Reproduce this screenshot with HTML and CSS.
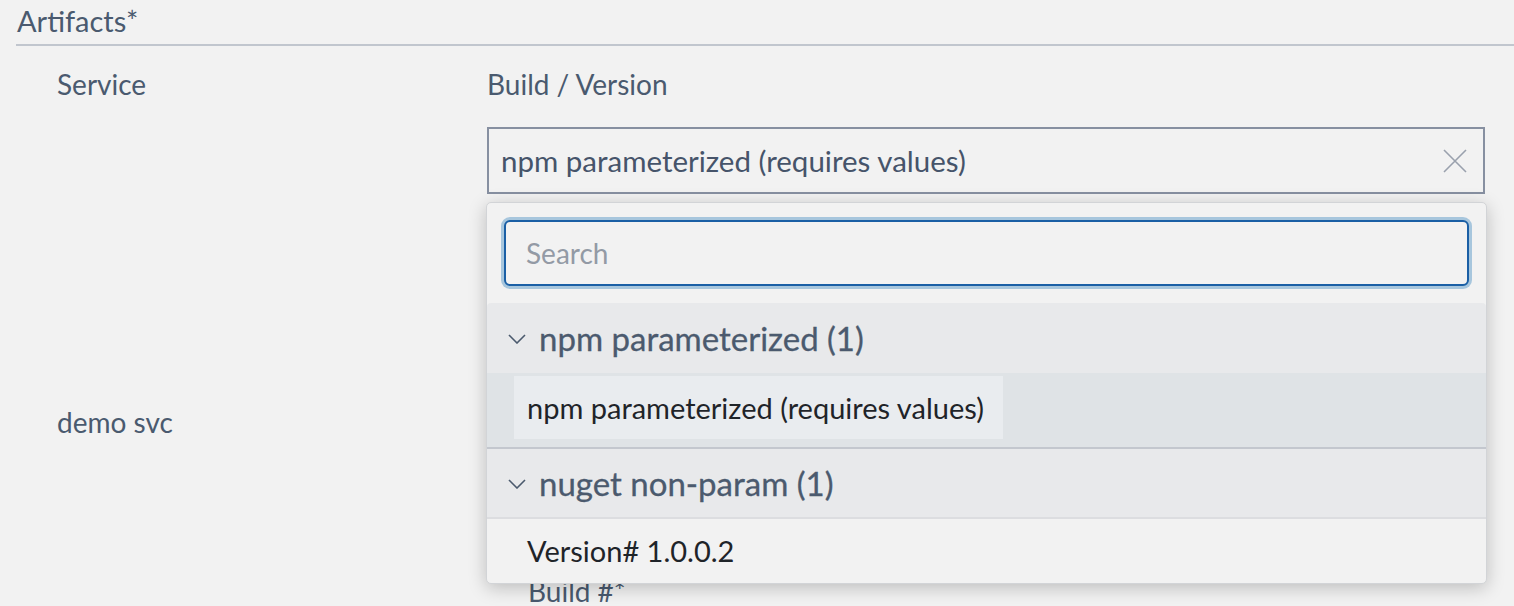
FILE: index.html
```html
<!DOCTYPE html>
<html lang="en">
<head>
    <meta charset="UTF-8">
    <meta name="viewport" content="width=device-width, initial-scale=1.0">
    <title>Artifacts</title>
    <link rel="stylesheet" href="styles.css">
</head>
<body>
    <div class="section">
        <div class="section-title">Artifacts*</div>

        <div class="artifact-table">
            <div class="col-label">Service</div>
            <div class="col-label">Build / Version</div>

            <div class="cell-service"></div>
            <div class="cell-version">
                <div class="select-box">
                    <span class="select-value">npm parameterized (requires values)</span>
                    <svg class="clear-icon" width="24" height="24" viewBox="0 0 24 24">
                        <path d="M1 1 L23 23 M23 1 L1 23" stroke="#9aa1ad" stroke-width="1.6" fill="none"/>
                    </svg>
                </div>

                <div class="dropdown">
                    <div class="search-wrap">
                        <input type="text" class="search-input" placeholder="Search">
                    </div>

                    <div class="group-header first">
                        <svg class="chevron" width="18" height="10" viewBox="0 0 18 10">
                            <path d="M1 1 L9 9 L17 1" stroke="#4b5a6e" stroke-width="1.6" fill="none"/>
                        </svg>
                        npm parameterized (1)
                    </div>
                    <div class="group-items active">
                        <div class="option focused">npm parameterized (requires values)</div>
                    </div>

                    <div class="group-header second">
                        <svg class="chevron" width="18" height="10" viewBox="0 0 18 10">
                            <path d="M1 1 L9 9 L17 1" stroke="#4b5a6e" stroke-width="1.6" fill="none"/>
                        </svg>
                        nuget non-param (1)
                    </div>
                    <div class="group-items">
                        <div class="option">Version# 1.0.0.2</div>
                    </div>
                </div>
            </div>

            <div class="cell-service demo">demo svc</div>
            <div class="cell-version"></div>

            <div class="cell-service"></div>
            <div class="cell-version build-label">Build #*</div>
        </div>
    </div>
</body>
</html>
```

FILE: styles.css
```css
* {
    margin: 0;
    padding: 0;
    box-sizing: border-box;
    font-family: Lato, "Open Sans", sans-serif;
}
body {
    background-color: #f2f2f2;
    color: #4a5a6f;
    overflow: hidden;
    height: 606px;
}
.section {
    padding: 6px 0 0 16px;
}
.section-title {
    font-size: 29px;
    line-height: 30px;
    padding: 0 0 8px 1px;
    border-bottom: 2px solid #c1c6ce;
}
.artifact-table {
    display: grid;
    grid-template-columns: 430px 1fr;
    padding: 0 29px 0 41px;
}
.col-label {
    font-size: 28px;
    line-height: 30px;
    margin-top: 23px;
}
.cell-version {
    position: relative;
}
.select-box {
    margin-top: 28px;
    height: 67px;
    border: 2px solid #8790a1;
    display: flex;
    align-items: center;
    justify-content: space-between;
    padding: 0 16px 0 12px;
}
.select-value {
    font-size: 29.5px;
    color: #46546a;
}
.clear-icon {
    display: block;
}
.dropdown {
    position: absolute;
    top: 103px;
    left: -1px;
    right: -2px;
    z-index: 10;
    background-color: #f2f2f2;
    border: 1px solid #d2d4d7;
    border-radius: 5px;
    box-shadow: 0 4px 18px rgba(0, 0, 0, 0.22);
}
.search-wrap {
    padding: 17px;
}
.search-input {
    width: 100%;
    height: 66px;
    border: 2px solid #1a5fa5;
    border-radius: 6px;
    box-shadow: 0 0 0 3px #a7c6dd;
    background-color: #f2f2f2;
    font-size: 28px;
    padding: 0 20px;
    color: #222;
    outline: none;
    caret-color: #000;
}
.search-input::placeholder {
    color: #939aa5;
}
.group-header {
    display: flex;
    align-items: center;
    gap: 13px;
    height: 70px;
    padding-left: 21px;
    background-color: #e8e9eb;
    font-size: 33px;
    color: #4b5a6e;
    -webkit-text-stroke: 0.3px #4b5a6e;
}
.group-header.first {
    border-radius: 4px 4px 0 0;
}
.group-header.second {
    border-bottom: 2px solid #dcdde0;
}
.chevron {
    display: block;
    margin-top: 2px;
}
.group-items.active {
    background-color: #dfe3e6;
    padding: 3px 0 8px 27px;
    border-bottom: 2px solid #c3c7ce;
}
.option {
    font-size: 29px;
    color: #1f2429;
    line-height: 64px;
    padding-left: 40px;
}
.group-items.active .option {
    display: inline-block;
    line-height: 63px;
    padding: 0 19px 0 13px;
    background-color: #e9ecef;
}
.demo {
    font-size: 28px;
    line-height: 30px;
    margin-top: 213px;
}
.build-label {
    font-size: 28px;
    line-height: 30px;
    margin-top: 139px;
    padding-left: 41px;
}
```
